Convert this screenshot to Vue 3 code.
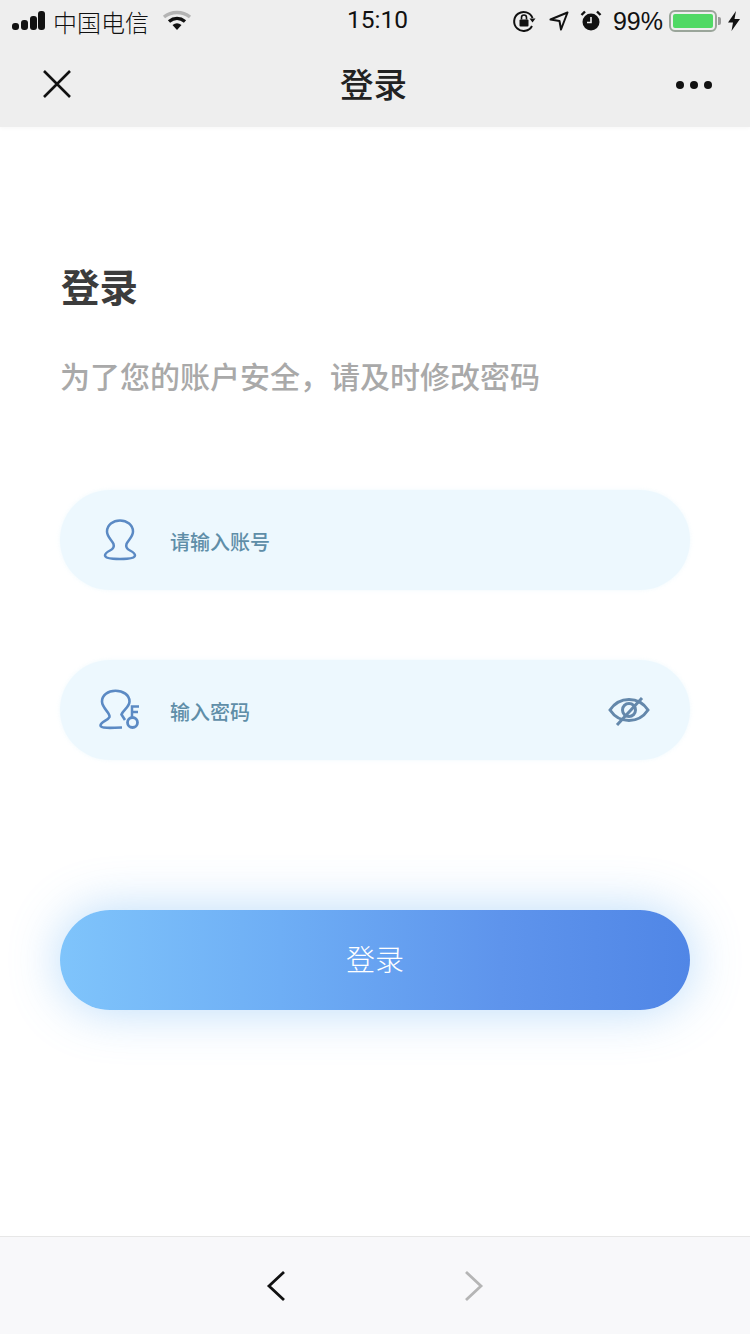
<template>
  <div class="page">
    <header class="top-bar">
      <div class="status-bar">
        <div class="status-left">
          <svg class="signal" width="36" height="20" viewBox="0 0 36 20">
            <rect x="0" y="12" width="7" height="7" rx="3" fill="#111" />
            <rect x="9" y="9" width="7" height="10" rx="3" fill="#111" />
            <rect x="18" y="5" width="7" height="14" rx="3" fill="#111" />
            <rect x="26" y="0" width="7" height="19" rx="3" fill="#111" />
          </svg>
          <span class="carrier">中国电信</span>
          <svg class="wifi" width="30" height="22" viewBox="0 0 30 22">
            <path d="M2 7C9.500 1 20.500 1 28 7" fill="none" stroke="#b4b4b4" stroke-width="3.500" />
            <path d="M7 11.500C12 7.500 18 7.500 23 11.500" fill="none" stroke="#111" stroke-width="3.500" />
            <path d="M10.500 15C13.500 12.800 16.500 12.800 19.500 15L15 20Z" fill="#111" />
          </svg>
        </div>
        <span class="clock">15:10</span>
        <div class="status-right">
          <svg width="24" height="24" viewBox="0 0 24 24">
            <path d="M20.500 9A9.500 9.500 0 1 0 20 17" fill="none" stroke="#111" stroke-width="2" />
            <path d="M17.500 9.500H23.500L20.500 13.500Z" fill="#111" />
            <rect x="7.500" y="10.500" width="9" height="7" rx="1" fill="#111" />
            <path d="M9.500 10.500V8.500A2.500 2.500 0 0 1 14.500 8.500V10.500" fill="none" stroke="#111" stroke-width="1.600" />
          </svg>
          <svg class="arrow" width="20" height="20" viewBox="0 0 20 20">
            <path d="M18.500 1.500L1.500 8.500L10.500 10L12 18.500Z" fill="none" stroke="#111" stroke-width="2" stroke-linejoin="round" />
          </svg>
          <svg class="alarm" width="22" height="24" viewBox="0 0 22 24">
            <circle cx="11" cy="13" r="8.500" fill="#111" />
            <path d="M11 8V13.500H7" fill="none" stroke="#eee" stroke-width="1.600" />
            <path d="M1.500 6L5 2.500M20.500 6L17 2.500" stroke="#111" stroke-width="2.400" />
          </svg>
          <span class="percent">99%</span>
          <div class="battery">
            <div class="battery-fill"></div>
          </div>
          <div class="battery-cap"></div>
          <svg class="bolt" width="12" height="20" viewBox="0 0 12 20">
            <path d="M8 0L0 11.500H5L3.500 20L12 8H6.500Z" fill="#111" />
          </svg>
        </div>
      </div>
      <div class="nav-bar">
        <svg class="nav-close" width="30" height="30" viewBox="0 0 30 30">
          <path d="M2 2L28 28M28 2L2 28" stroke="#111" stroke-width="2.600" />
        </svg>
        <span class="nav-title">登录</span>
        <div class="nav-more">
          <i></i>
          <i></i>
          <i></i>
        </div>
      </div>
    </header>

    <main class="content">
      <h1 class="title">登录</h1>
      <p class="subtitle">为了您的账户安全，请及时修改密码</p>

      <div class="field first">
        <svg class="field-icon" width="34" height="42" viewBox="0 0 34 42">
          <path d="M17 1.500C24 1.500 30 6 30 12.500C30 18 25 21 23.500 25C22.500 28 24 30 27 31.500C30 33 32 34.500 32 36.500C32 39 26 40 17 40C8 40 2 39 2 36.500C2 34.500 4 33 7 31.500C10 30 11.500 28 10.500 25C9 21 4 18 4 12.500C4 6 10 1.500 17 1.500Z" fill="none" stroke="#5b8ac4" stroke-width="2.500" />
        </svg>
        <span class="placeholder">请输入账号</span>
      </div>

      <div class="field second">
        <svg class="field-icon key" width="42" height="42" viewBox="0 0 42 42">
          <path d="M23 38.500C12 39 1.500 39.500 1.500 36.500C1.500 33 9 31.500 10.500 28C11.500 24 3 19 3 12.500C3 6 9 1.700 16.500 1.700C24 1.700 30.500 6 30.500 12.500C30.500 18 24 21 22.500 25.500L26 31" fill="none" stroke="#5b8ac4" stroke-width="2.600" />
          <circle cx="33.500" cy="33.500" r="5" fill="none" stroke="#5b8ac4" stroke-width="2.800" />
          <path d="M33 28V17.500H40M33 23H39" fill="none" stroke="#5b8ac4" stroke-width="2.500" />
        </svg>
        <span class="placeholder">输入密码</span>
        <svg class="eye" width="42" height="32" viewBox="0 0 42 32">
          <path d="M2 16C6 10 13 5.500 21 5.500C29 5.500 36 10 40 16C36 22 29 26.500 21 26.500C13 26.500 6 22 2 16Z" fill="none" stroke="#6488ab" stroke-width="3" />
          <circle cx="21" cy="16" r="6.500" fill="none" stroke="#6488ab" stroke-width="3" />
          <path d="M9 31L34 4" stroke="#6488ab" stroke-width="3" />
        </svg>
      </div>

      <button class="login-btn" type="button">登录</button>
    </main>

    <footer class="bottom-bar">
      <svg width="20" height="32" viewBox="0 0 20 32">
        <path d="M18 2L3 16L18 30" fill="none" stroke="#111" stroke-width="2.800" />
      </svg>
      <svg width="20" height="32" viewBox="0 0 20 32">
        <path d="M2 2L17 16L2 30" fill="none" stroke="#b5b5b5" stroke-width="2.800" />
      </svg>
    </footer>
  </div>
</template>

<script setup>
</script>

<style>
html,
body {
  margin: 0;
  background: #fff;
}
</style>

<style scoped>
.page {
  width: 750px;
  height: 1334px;
  display: flex;
  flex-direction: column;
  overflow: hidden;
  font-family: "Noto Sans CJK SC", "Liberation Sans", sans-serif;
}

.top-bar {
  height: 127px;
  flex-shrink: 0;
  background: #eeeeee;
  box-shadow: 0 1px 4px rgba(0, 0, 0, 0.04);
}

.status-bar {
  height: 42px;
  padding: 0 10px 0 12px;
  position: relative;
  display: flex;
  align-items: center;
  justify-content: space-between;
  color: #111;
}

.status-left,
.status-right {
  display: flex;
  align-items: center;
}

.carrier {
  font-size: 24px;
  margin-left: 5px;
  font-weight: 300;
}

.wifi {
  margin-left: 13px;
}

.clock {
  position: absolute;
  left: 347px;
  top: 3px;
  font-size: 24.500px;
  line-height: 34px;
  font-weight: 400;
  font-family: Roboto, "Liberation Sans", sans-serif;
}

.arrow {
  margin-left: 13px;
}

.alarm {
  margin-left: 11px;
}

.percent {
  margin-left: 11px;
  font-size: 25px;
  font-family: "Liberation Sans", sans-serif;
}

.battery {
  width: 48px;
  height: 22px;
  margin-left: 6px;
  box-sizing: border-box;
  padding: 2px;
  border: 2px solid #9aa59a;
  border-radius: 6px;
}

.battery-fill {
  height: 100%;
  background: #4fd964;
  border-radius: 2px;
}

.battery-cap {
  width: 3px;
  height: 8px;
  margin-left: 1px;
  background: #9a9a9a;
  border-radius: 0 2px 2px 0;
}

.bolt {
  margin-left: 7px;
}

.nav-bar {
  height: 85px;
  position: relative;
  display: flex;
  align-items: center;
  justify-content: space-between;
  padding: 0 38px 0 42px;
}

.nav-close {
  margin-bottom: 1px;
}

.nav-title {
  position: absolute;
  left: 340px;
  top: 18px;
  font-size: 33.500px;
  line-height: 46px;
  font-weight: 500;
  color: #222;
}

.nav-more {
  display: flex;
  gap: 6px;
}

.nav-more i {
  width: 8px;
  height: 8px;
  border-radius: 50%;
  background: #111;
}

.content {
  flex: 1;
  padding: 0 60px;
}

.title {
  margin: 132px 0 0 1px;
  font-size: 38.500px;
  line-height: 52px;
  font-weight: 700;
  color: #3c3c3c;
}

.subtitle {
  margin: 41px 0 0;
  font-size: 30px;
  line-height: 46px;
  font-weight: 500;
  color: #a9a9a9;
}

.field {
  height: 100px;
  border-radius: 50px;
  background: #edf8fe;
  display: flex;
  align-items: center;
  box-shadow: 0 0 4px rgba(235, 247, 253, 0.8);
}

.first {
  margin-top: 92px;
}

.second {
  margin-top: 70px;
}

.field-icon {
  margin-left: 43px;
  margin-right: 33px;
}

.key {
  margin-left: 39px;
  margin-right: 29px;
}

.placeholder {
  font-size: 20px;
  line-height: 28px;
  padding-top: 3px;
  color: #5f8ea8;
  font-weight: 500;
}

.eye {
  margin-left: auto;
  margin-right: 40px;
}

.login-btn {
  display: block;
  width: 630px;
  height: 100px;
  margin-top: 150px;
  padding: 0 0 4px;
  border: none;
  border-radius: 50px;
  background: linear-gradient(90deg, #7fc4fb 0%, #6eaef5 35%, #5e94ec 70%, #5086e6 100%);
  box-shadow: 0 0 50px rgba(100, 175, 245, 0.45);
  color: #fff;
  font-family: inherit;
  font-size: 29px;
  font-weight: 300;
}

.bottom-bar {
  height: 98px;
  box-sizing: border-box;
  flex-shrink: 0;
  background: #f8f8fa;
  border-top: 1px solid #e7e7e7;
  display: flex;
  align-items: center;
  justify-content: center;
  gap: 178px;
}
</style>
